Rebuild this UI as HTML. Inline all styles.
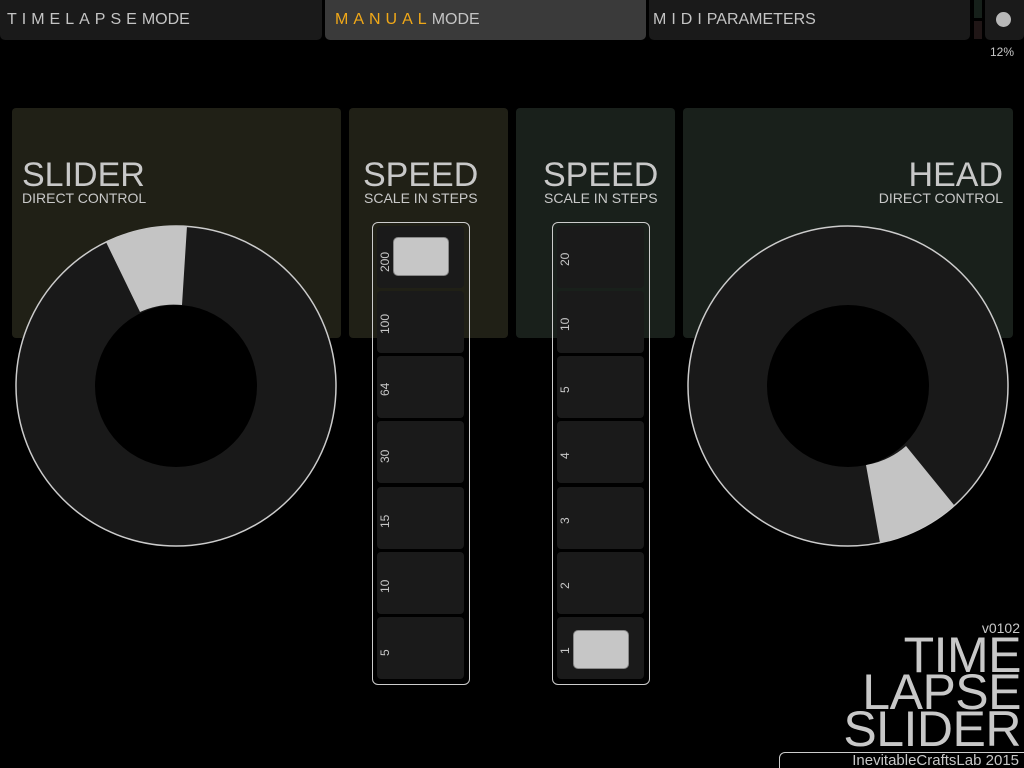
<!DOCTYPE html>
<html><head><meta charset="utf-8"><style>
html,body{margin:0;width:1024px;height:768px;overflow:hidden}
body{background:#000;position:relative;font-family:"Liberation Sans",sans-serif;color:#c8c8c8}
.a{position:absolute}
.tab{position:absolute;top:0;height:40px;background:#1a1a1a;border-radius:0 0 5px 5px;font-size:16px;line-height:40px;padding-left:7px;box-sizing:border-box;color:#c4c4c4}
.pan{position:absolute;top:108px;height:230px;border-radius:4px}
.big{position:absolute;font-size:34px;top:156px}
.sub{position:absolute;font-size:14px;top:190px}
.st{position:absolute;top:222px;width:98px;height:463px;border:1.5px solid #ccc;border-radius:6px;box-sizing:border-box}
.cell{position:absolute;left:4px;width:87px;height:62px;background:#1a1a1a;border-radius:4px}
.lab{position:absolute;left:5px;font-size:12px;transform:rotate(-90deg);transform-origin:left top;}
.h{position:absolute;width:56px;height:39px;background:#c6c6c6;border-radius:5px;border:1px solid #888;box-sizing:border-box}
</style></head><body>
<div class="tab" style="left:0;width:322px"><span style="letter-spacing:5px">TIMELAPSE</span>MODE</div>
<div class="tab" style="left:325px;width:321px;background:#3a3a3a;padding-left:10px"><span style="letter-spacing:5px;color:#f0a818">MANUAL</span>MODE</div>
<div class="tab" style="left:649px;width:321px;padding-left:4px"><span style="letter-spacing:5px">MIDI</span>PARAMETERS</div>
<div class="a" style="left:974px;top:0;width:8px;height:18px;background:#16201a"></div>
<div class="a" style="left:974px;top:21px;width:8px;height:18px;background:#201616"></div>
<div class="tab" style="left:985px;width:39px"></div>
<div class="a" style="left:996px;top:12px;width:15px;height:15px;border-radius:50%;background:#b8b8b8"></div>
<div class="a" style="left:990px;top:45px;font-size:12px">12%</div>

<div class="pan" style="left:12px;width:329px;background:#202016"></div>
<div class="pan" style="left:349px;width:159px;background:#202016"></div>
<div class="pan" style="left:516px;width:159px;background:#19201b"></div>
<div class="pan" style="left:683px;width:330px;background:#19201b"></div>
<div class="big" style="left:22px">SLIDER</div><div class="sub" style="left:22px">DIRECT CONTROL</div>
<div class="big" style="left:363px">SPEED</div><div class="sub" style="left:364px">SCALE IN STEPS</div>
<div class="big" style="left:543px">SPEED</div><div class="sub" style="left:544px">SCALE IN STEPS</div>
<div class="big" style="right:21px">HEAD</div><div class="sub" style="right:21px">DIRECT CONTROL</div>

<svg class="a" style="left:0;top:0" width="1024" height="768">
<circle cx="176" cy="386" r="160" fill="#191919" stroke="#ccc" stroke-width="1.5"/>
<path d="M106 242 A160 160 0 0 1 187 226 L182 305 A81 81 0 0 0 140 312 Z" fill="#c4c4c4"/>
<circle cx="176" cy="386" r="81" fill="#000"/>
<circle cx="848" cy="386" r="160" fill="#191919" stroke="#ccc" stroke-width="1.5"/>
<path d="M954 505 A160 160 0 0 1 880 543 L866 465 A81 81 0 0 0 906 446 Z" fill="#c4c4c4"/>
<circle cx="848" cy="386" r="81" fill="#000"/>
</svg>

<div class="st" style="left:372px">
<div class="cell" style="top:3px"></div><div class="cell" style="top:68px"></div><div class="cell" style="top:133px"></div><div class="cell" style="top:198px"></div><div class="cell" style="top:264px"></div><div class="cell" style="top:329px"></div><div class="cell" style="top:394px"></div>
<div class="lab" style="top:49px">200</div><div class="lab" style="top:111px">100</div><div class="lab" style="top:173px">64</div><div class="lab" style="top:240px">30</div><div class="lab" style="top:305px">15</div><div class="lab" style="top:370px">10</div><div class="lab" style="top:433px">5</div>
<div class="h" style="left:20px;top:14px"></div>
</div>
<div class="st" style="left:552px">
<div class="cell" style="top:3px"></div><div class="cell" style="top:68px"></div><div class="cell" style="top:133px"></div><div class="cell" style="top:198px"></div><div class="cell" style="top:264px"></div><div class="cell" style="top:329px"></div><div class="cell" style="top:394px"></div>
<div class="lab" style="top:43px">20</div><div class="lab" style="top:108px">10</div><div class="lab" style="top:170px">5</div><div class="lab" style="top:236px">4</div><div class="lab" style="top:301px">3</div><div class="lab" style="top:366px">2</div><div class="lab" style="top:431px">1</div>
<div class="h" style="left:20px;top:407px"></div>
</div>

<div class="a" style="right:4px;top:620px;font-size:14px">v0102</div>
<div class="a" style="right:3px;top:637px;font-size:50px;line-height:37px;text-align:right;letter-spacing:-0.5px">TIME<br>LAPSE<br>SLIDER</div>
<div class="a" style="left:779px;top:752px;width:260px;height:30px;border:1.5px solid #ccc;border-radius:6px;background:#000"></div>
<div class="a" style="right:5px;top:752px;font-size:15px;line-height:17px">InevitableCraftsLab 2015</div>
</body></html>
